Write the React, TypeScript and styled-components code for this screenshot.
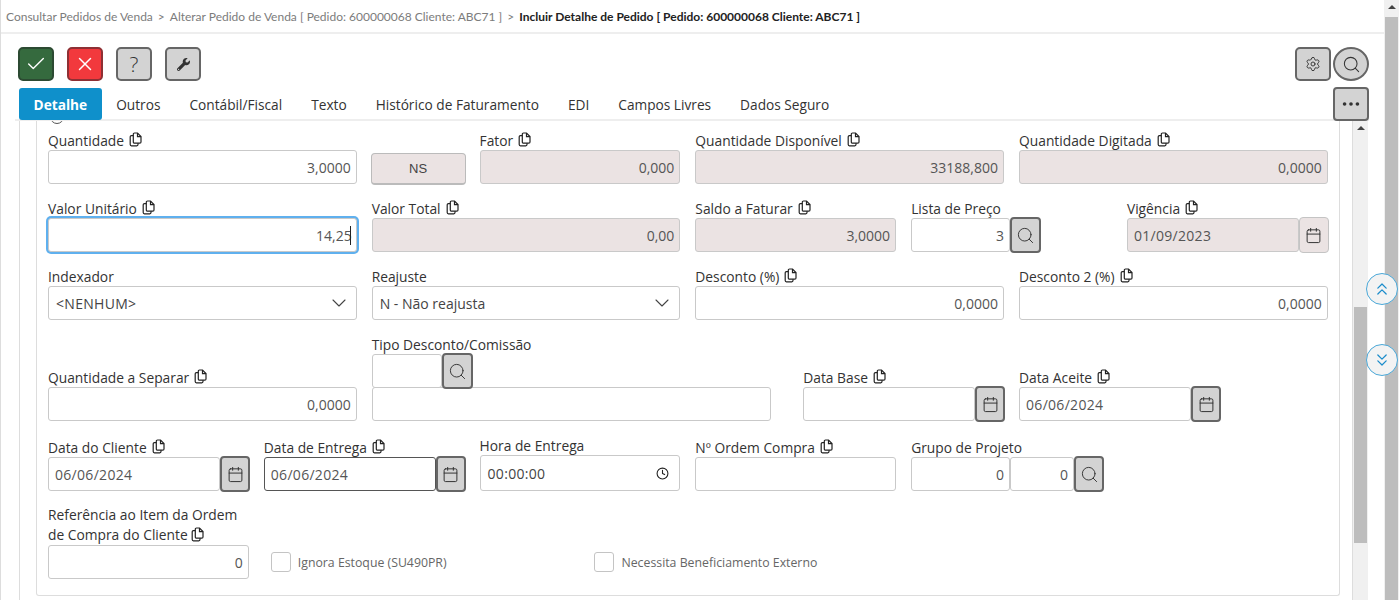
import React from "react";
import styled, { createGlobalStyle } from "styled-components";
import { Check, X, Settings, Search, Ellipsis, ChevronDown, ChevronsUp, ChevronsDown, Calendar, Clock } from "lucide-react";
import { FaWrench } from "react-icons/fa";

const GlobalStyle = createGlobalStyle`
  html, body {
    margin: 0;
    height: 100%;
    overflow: hidden;
    background: #fff;
  }
  * {
    box-sizing: border-box;
  }
`;

const Page = styled.div`
  width: 1399px;
  height: 600px;
  display: flex;
  font-family: "Open Sans", "Noto Sans", sans-serif;
  color: #333;
  overflow: hidden;
  position: relative;
`;

const Main = styled.div`
  width: 1384px;
  border-left: 1px solid #ddd;
  display: flex;
  flex-direction: column;
`;

const Crumbs = styled.div`
  height: 34px;
  flex: none;
  padding-left: 5px;
  border-bottom: 2px solid #eee;
  font-family: "Lato", sans-serif;
  font-size: 12px;
  line-height: 34px;
  color: #7c7c7c;
  white-space: nowrap;
`;

const CrumbSeparator = styled.span`
  margin: 0 5px;
`;

const CrumbCurrent = styled.span`
  color: #222;
  font-weight: 700;
`;

const Toolbar = styled.div`
  height: 36px;
  margin-top: 13px;
  padding: 0 15px 0 17px;
  display: flex;
  flex: none;
  gap: 13px;
`;

const ToolButton = styled.button<{ $bg?: string; $line?: string; $fg?: string }>`
  width: 36px;
  height: 34px;
  padding: 0;
  display: flex;
  align-items: center;
  justify-content: center;
  background: ${(p) => p.$bg || "#d3d3d3"};
  border: 2px solid ${(p) => p.$line || "#666"};
  border-radius: 5px;
  color: ${(p) => p.$fg || "#333"};
  font-family: "Open Sans", sans-serif;
  font-weight: 300;
  font-size: 21px;
`;

const Spacer = styled.div`
  flex: 1;
`;

const RightTools = styled.div`
  display: flex;
  gap: 2px;
`;

const RoundButton = styled(ToolButton)`
  border-radius: 50%;
`;

const TabRow = styled.div`
  height: 34px;
  flex: none;
  margin: 4px 15px 0 14px;
  padding-left: 4px;
  display: flex;
  align-items: flex-end;
  border-bottom: 2px solid #eee;
  position: relative;
`;

const Tab = styled.div<{ $active?: boolean }>`
  height: 32px;
  margin-bottom: -1px;
  padding: 0 14.5px;
  border-radius: 3px;
  font-size: 13.7px;
  line-height: 34px;
  white-space: nowrap;
  background: ${(p) => (p.$active ? "#0f90cb" : "transparent")};
  color: ${(p) => (p.$active ? "#fff" : "#333")};
  font-weight: ${(p) => (p.$active ? 700 : 400)};
`;

const MoreButton = styled(ToolButton)`
  position: absolute;
  right: 0;
  top: 0;
  border-radius: 4px;
`;

const Body = styled.div`
  flex: 1;
  min-height: 0;
  margin-left: 18px;
  display: flex;
  overflow: hidden;
`;

const Pane = styled.div`
  width: 1334px;
  border-left: 1px solid #ddd;
  border-right: 1px solid #ddd;
  padding: 0 12px 0 16px;
  overflow: hidden;
`;

const Card = styled.div`
  height: 475px;
  padding: 9px 11px 0 11px;
  border: 1px solid #ddd;
  border-top: 0;
  border-radius: 0 0 3px 3px;
  position: relative;
`;

const ClippedRadio = styled.div`
  position: absolute;
  left: 13px;
  top: -11px;
  width: 14px;
  height: 14px;
  border: 1px solid #555;
  border-radius: 50%;
`;

const FormGrid = styled.div`
  display: grid;
  grid-template-columns: repeat(12, 92.9px);
  column-gap: 15px;
  row-gap: 14px;
  align-items: end;
`;

const Cell = styled.div<{ $span: number; $start?: number }>`
  grid-column: ${(p) => (p.$start ? `${p.$start} / span ${p.$span}` : `span ${p.$span}`)};
  min-width: 0;
`;

const Label = styled.div`
  height: 20px;
  font-size: 13.8px;
  line-height: 23px;
  color: #333;
  white-space: nowrap;
  display: flex;
  align-items: center;
  gap: 5px;
`;

const WrapLabel = styled.div`
  font-size: 13.8px;
  line-height: 20px;
  color: #333;
  white-space: nowrap;
`;

const Field = styled.div<{
  $readonly?: boolean;
  $right?: boolean;
  $focus?: boolean;
  $dark?: boolean;
  $width?: number;
  $spaced?: boolean;
}>`
  height: 34px;
  width: ${(p) => (p.$width ? `${p.$width}px` : "100%")};
  flex: ${(p) => (p.$width ? "none" : "1")};
  min-width: 0;
  display: flex;
  align-items: center;
  justify-content: ${(p) => (p.$right ? "flex-end" : "flex-start")};
  padding: 0 5px 0 6px;
  border: 1px solid ${(p) => (p.$dark ? "#555" : "#c9c9c9")};
  border-radius: 3px;
  background: ${(p) => (p.$readonly ? "#ebe3e3" : "#fff")};
  font-size: 14px;
  letter-spacing: ${(p) => (p.$spaced ? "0.3px" : "0")};
  color: #555;
  box-shadow: ${(p) => (p.$focus ? "0 0 0 2px #5fb0ee" : "none")};
`;

const StackedField = styled(Field)`
  margin-top: -1px;
`;

const Caret = styled.span`
  width: 1px;
  height: 19px;
  margin-left: -2px;
  background: #222;
`;

const SelectField = styled(Field)`
  justify-content: space-between;
  padding: 0 5px 0 7px;
  color: #444;
`;

const TimeField = styled(SelectField)`
  height: 36px;
  padding-right: 10px;
`;

const UnitBox = styled.div`
  height: 32px;
  margin: 0 -1px -1px;
  display: flex;
  align-items: center;
  justify-content: center;
  background: #ebe3e3;
  border: 1px solid #bbb;
  border-bottom-width: 2px;
  border-radius: 4px;
  font-family: "Liberation Sans", sans-serif;
  font-size: 13px;
  color: #444;
`;

const Joined = styled.div`
  display: flex;
  align-items: center;
`;

const AddonButton = styled.div<{ $readonly?: boolean; $width?: number }>`
  width: ${(p) => p.$width || 30}px;
  height: 36px;
  margin: -1px 0;
  flex: none;
  display: flex;
  align-items: center;
  justify-content: center;
  background: ${(p) => (p.$readonly ? "#ebe3e3" : "#d3d3d3")};
  border: ${(p) => (p.$readonly ? "1px solid #c4c4c4" : "2px solid #666")};
  border-radius: 4px;
  color: #333;
`;

const CheckField = styled.div`
  height: 34px;
  padding-left: 7px;
  display: flex;
  align-items: center;
  gap: 7px;
  font-size: 12.3px;
  color: #666;
  white-space: nowrap;
`;

const Box = styled.span`
  width: 20px;
  height: 20px;
  margin-top: -1px;
  border: 1px solid #c4c4c4;
  border-radius: 3px;
`;

const ScrollTrack = styled.div<{ $top: number; $height: number }>`
  width: 15px;
  flex: none;
  background: #f0f0f0;
  padding-top: ${(p) => p.$top}px;
  position: relative;

  &::before {
    content: "";
    display: block;
    height: ${(p) => p.$height}px;
    margin: 0 1px;
    background: #bdbdbd;
  }

  &::after {
    content: "";
    position: absolute;
    top: 5px;
    left: 50%;
    margin-left: -4px;
    border: 4px solid transparent;
    border-top: 0;
    border-bottom: 4px solid #444;
  }
`;

const JumpButton = styled.div<{ $top: number }>`
  position: absolute;
  left: 1366px;
  top: ${(p) => p.$top}px;
  width: 32px;
  height: 32px;
  display: flex;
  align-items: center;
  justify-content: center;
  background: #f3f3f3;
  border: 1px solid #4aa8d8;
  border-radius: 50%;
  color: #1b8ccb;
`;

const CopySvg = styled.svg`
  width: 13px;
  height: 15px;
  flex: none;
  fill: none;
  stroke: #222;
  stroke-width: 1.2;
  vertical-align: -2px;
  margin-top: -2px;
`;

const CopyIcon = () => (
  <CopySvg viewBox="0 0 13 15">
    <path d="M5.5 1H8.5L12 4.6V10a1.2 1.2 0 0 1-1.2 1.2H5.5A1.2 1.2 0 0 1 4.3 10V2.2A1.2 1.2 0 0 1 5.5 1Z" />
    <path d="M8.5 1V4.6H12" />
    <path d="M4.3 3.6H2.4A1.2 1.2 0 0 0 1.2 4.8V12.6A1.2 1.2 0 0 0 2.4 13.8H7.8A1.2 1.2 0 0 0 9 12.6V11.2" />
  </CopySvg>
);

const CalendarAddon = ({ readonly }: { readonly?: boolean }) => (
  <AddonButton $readonly={readonly}>
    <Calendar size={17} strokeWidth={1.4} />
  </AddonButton>
);

const SearchAddon = ({ width = 31 }: { width?: number }) => (
  <AddonButton $width={width}>
    <Search size={19} strokeWidth={1.2} />
  </AddonButton>
);

const FieldLabel = ({ text, copy = true }: { text: string; copy?: boolean }) => (
  <Label>
    {text}
    {copy && <CopyIcon />}
  </Label>
);

export default function App() {
  return (
    <Page>
      <GlobalStyle />
      <Main>
        <Crumbs>
          Consultar Pedidos de Venda
          <CrumbSeparator>&gt;</CrumbSeparator>
          Alterar Pedido de Venda [ Pedido: 600000068 Cliente: ABC71 ]
          <CrumbSeparator>&gt;</CrumbSeparator>
          <CrumbCurrent>Incluir Detalhe de Pedido [ Pedido: 600000068 Cliente: ABC71 ]</CrumbCurrent>
        </Crumbs>
        <Toolbar>
          <ToolButton $bg="#356a3e" $line="#2c4a32" $fg="#fff">
            <Check size={22} strokeWidth={1.5} />
          </ToolButton>
          <ToolButton $bg="#f2393d" $line="#8e3034" $fg="#fff">
            <X size={22} strokeWidth={1.6} />
          </ToolButton>
          <ToolButton>?</ToolButton>
          <ToolButton>
            <FaWrench size={13} />
          </ToolButton>
          <Spacer />
          <RightTools>
            <ToolButton>
              <Settings size={16} strokeWidth={1.4} />
            </ToolButton>
            <RoundButton>
              <Search size={19} strokeWidth={1.3} />
            </RoundButton>
          </RightTools>
        </Toolbar>
        <TabRow>
          <Tab $active>Detalhe</Tab>
          <Tab>Outros</Tab>
          <Tab>Contábil/Fiscal</Tab>
          <Tab>Texto</Tab>
          <Tab>Histórico de Faturamento</Tab>
          <Tab>EDI</Tab>
          <Tab>Campos Livres</Tab>
          <Tab>Dados Seguro</Tab>
          <MoreButton>
            <Ellipsis size={22} strokeWidth={2} />
          </MoreButton>
        </TabRow>
        <Body>
          <Pane>
            <Card>
              <ClippedRadio />
              <FormGrid>
                <Cell $span={3}>
                  <FieldLabel text="Quantidade" />
                  <Field $right>3,0000</Field>
                </Cell>
                <Cell $span={1}>
                  <UnitBox>NS</UnitBox>
                </Cell>
                <Cell $span={2}>
                  <FieldLabel text="Fator" />
                  <Field $readonly $right>0,000</Field>
                </Cell>
                <Cell $span={3}>
                  <FieldLabel text="Quantidade Disponível" />
                  <Field $readonly $right>33188,800</Field>
                </Cell>
                <Cell $span={3}>
                  <FieldLabel text="Quantidade Digitada" />
                  <Field $readonly $right>0,0000</Field>
                </Cell>

                <Cell $span={3}>
                  <FieldLabel text="Valor Unitário" />
                  <Field $right $focus>
                    14,25
                    <Caret />
                  </Field>
                </Cell>
                <Cell $span={3}>
                  <FieldLabel text="Valor Total" />
                  <Field $readonly $right>0,00</Field>
                </Cell>
                <Cell $span={2}>
                  <FieldLabel text="Saldo a Faturar" />
                  <Field $readonly $right>3,0000</Field>
                </Cell>
                <Cell $span={2}>
                  <FieldLabel text="Lista de Preço" copy={false} />
                  <Joined>
                    <Field $right $width={99}>3</Field>
                    <SearchAddon />
                  </Joined>
                </Cell>
                <Cell $span={2}>
                  <FieldLabel text="Vigência" />
                  <Joined>
                    <Field $readonly $spaced $width={172}>01/09/2023</Field>
                    <CalendarAddon readonly />
                  </Joined>
                </Cell>

                <Cell $span={3}>
                  <FieldLabel text="Indexador" copy={false} />
                  <SelectField $spaced>
                    &lt;NENHUM&gt;
                    <ChevronDown size={24} strokeWidth={1.1} />
                  </SelectField>
                </Cell>
                <Cell $span={3}>
                  <FieldLabel text="Reajuste" copy={false} />
                  <SelectField>
                    N - Não reajusta
                    <ChevronDown size={24} strokeWidth={1.1} />
                  </SelectField>
                </Cell>
                <Cell $span={3}>
                  <FieldLabel text="Desconto (%)" />
                  <Field $right>0,0000</Field>
                </Cell>
                <Cell $span={3}>
                  <FieldLabel text="Desconto 2 (%)" />
                  <Field $right>0,0000</Field>
                </Cell>

                <Cell $span={3}>
                  <FieldLabel text="Quantidade a Separar" />
                  <Field $right>0,0000</Field>
                </Cell>
                <Cell $span={4}>
                  <FieldLabel text="Tipo Desconto/Comissão" copy={false} />
                  <Joined>
                    <Field $width={70} />
                    <SearchAddon />
                  </Joined>
                  <StackedField $width={399} />
                </Cell>
                <Cell $span={2} $start={8}>
                  <FieldLabel text="Data Base" />
                  <Joined>
                    <Field $width={172} />
                    <CalendarAddon />
                  </Joined>
                </Cell>
                <Cell $span={2} $start={10}>
                  <FieldLabel text="Data Aceite" />
                  <Joined>
                    <Field $spaced $width={172}>06/06/2024</Field>
                    <CalendarAddon />
                  </Joined>
                </Cell>

                <Cell $span={2}>
                  <FieldLabel text="Data do Cliente" />
                  <Joined>
                    <Field $spaced $width={172}>06/06/2024</Field>
                    <CalendarAddon />
                  </Joined>
                </Cell>
                <Cell $span={2}>
                  <FieldLabel text="Data de Entrega" />
                  <Joined>
                    <Field $dark $spaced $width={172}>06/06/2024</Field>
                    <CalendarAddon />
                  </Joined>
                </Cell>
                <Cell $span={2}>
                  <FieldLabel text="Hora de Entrega" copy={false} />
                  <TimeField $spaced>
                    00:00:00
                    <Clock size={13} strokeWidth={2} color="#222" />
                  </TimeField>
                </Cell>
                <Cell $span={2}>
                  <FieldLabel text="Nº Ordem Compra" />
                  <Field />
                </Cell>
                <Cell $span={2}>
                  <FieldLabel text="Grupo de Projeto" copy={false} />
                  <Joined>
                    <Field $right $width={99}>0</Field>
                    <Field $right $width={64}>0</Field>
                    <SearchAddon width={30} />
                  </Joined>
                </Cell>
                <Cell $span={2} />

                <Cell $span={2}>
                  <WrapLabel>
                    Referência ao Item da Ordem
                    <br />
                    de Compra do Cliente <CopyIcon />
                  </WrapLabel>
                  <Field $right>0</Field>
                </Cell>
                <Cell $span={3}>
                  <CheckField>
                    <Box />
                    Ignora Estoque (SU490PR)
                  </CheckField>
                </Cell>
                <Cell $span={3}>
                  <CheckField>
                    <Box />
                    Necessita Beneficiamento Externo
                  </CheckField>
                </Cell>
              </FormGrid>
            </Card>
          </Pane>
          <ScrollTrack $top={186} $height={236} />
        </Body>
      </Main>
      <ScrollTrack $top={17} $height={600} />
      <JumpButton $top={273}>
        <ChevronsUp size={20} strokeWidth={1.5} />
      </JumpButton>
      <JumpButton $top={344}>
        <ChevronsDown size={20} strokeWidth={1.5} />
      </JumpButton>
    </Page>
  );
}
